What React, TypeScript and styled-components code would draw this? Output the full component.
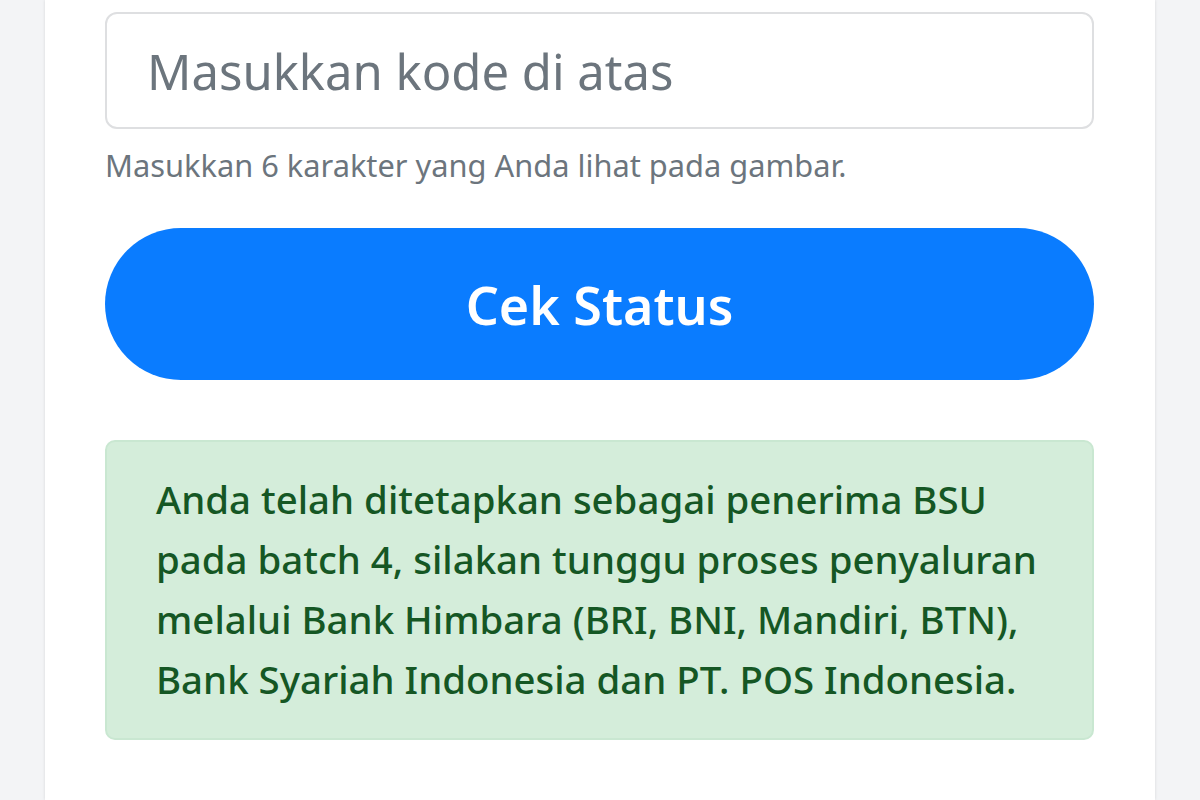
import React from "react";
import styled, { createGlobalStyle } from "styled-components";

const GlobalStyle = createGlobalStyle`
  html, body {
    margin: 0;
    padding: 0;
    background: #f3f4f6;
    font-family: "Noto Sans", "Open Sans", sans-serif;
  }
  * {
    box-sizing: border-box;
  }
`;

const Page = styled.div`
  display: flex;
  justify-content: center;
  min-height: 100vh;
`;

const Card = styled.main`
  width: 1110px;
  min-height: 100vh;
  background: #ffffff;
  box-shadow: 0 0 3px rgba(0, 0, 0, 0.12);
  padding: 12px 61px 40px 60px;
  display: flex;
  flex-direction: column;
`;

const CodeInput = styled.input`
  width: 100%;
  height: 117px;
  border: 2px solid #dedfe1;
  border-radius: 12px;
  padding: 0 40px;
  font-family: inherit;
  font-size: 49px;
  color: #333;
  background: #fff;
  outline: none;

  &::placeholder {
    color: #6c757d;
    opacity: 1;
  }
`;

const HelpText = styled.small`
  display: block;
  margin-top: 15px;
  font-size: 30.8px;
  line-height: 42px;
  color: #6c757d;
`;

const SubmitButton = styled.button`
  margin-top: 42px;
  width: 100%;
  height: 152px;
  border: none;
  border-radius: 76px;
  background: #0a7cff;
  color: #ffffff;
  font-family: inherit;
  font-size: 52px;
  font-weight: 600;
  cursor: pointer;
`;

const Alert = styled.div`
  margin-top: 60px;
  background: #d4edda;
  border: 2px solid #c9e7d1;
  border-radius: 10px;
  padding: 27px 20px 29px 49px;
  color: #155724;
  font-size: 38.4px;
  font-weight: 500;
  line-height: 60px;
`;

const AlertLine = styled.span`
  display: block;
  white-space: nowrap;
`;

const lines = [
  "Anda telah ditetapkan sebagai penerima BSU",
  "pada batch 4, silakan tunggu proses penyaluran",
  "melalui Bank Himbara (BRI, BNI, Mandiri, BTN),",
  "Bank Syariah Indonesia dan PT. POS Indonesia.",
];

export default function App() {
  return (
    <>
      <GlobalStyle />
      <Page>
        <Card>
          <CodeInput placeholder="Masukkan kode di atas" />
          <HelpText>Masukkan 6 karakter yang Anda lihat pada gambar.</HelpText>
          <SubmitButton type="button">Cek Status</SubmitButton>
          <Alert role="alert">
            {lines.map((line) => (
              <AlertLine key={line}>{line}</AlertLine>
            ))}
          </Alert>
        </Card>
      </Page>
    </>
  );
}
